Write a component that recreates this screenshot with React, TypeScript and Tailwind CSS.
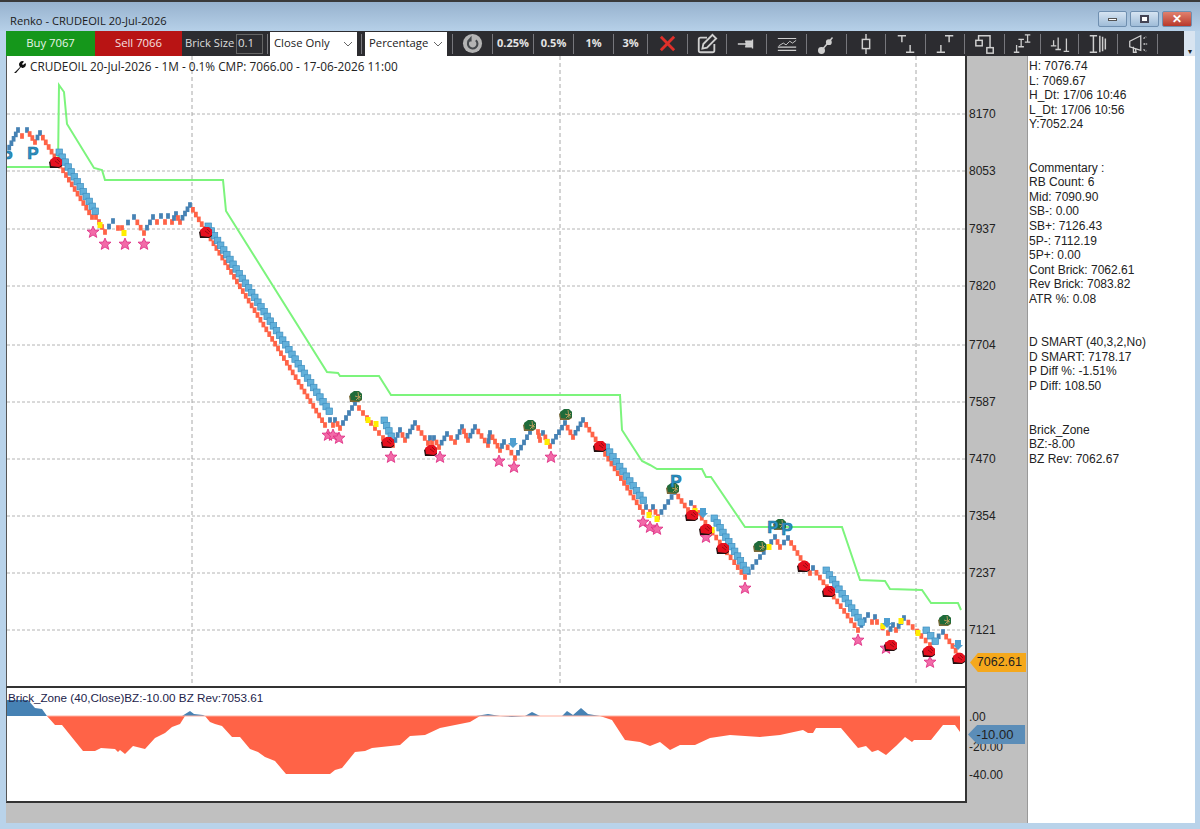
import React from "react";

type P = [number, number];

const line: P[] = [[7,152],[18,130],[22,136],[27,130],[35,142],[40,133],[92,217],[96,217],[105,232],[113,221],[118,228],[122,228],[134,217],[144,233],[153,217],[157,222],[161,216],[165,222],[168,216],[172,222],[176,214],[180,222],[190,205],[325,425],[330,420],[333,425],[335,420],[340,428],[355,403],[383,438],[393,445],[400,430],[405,440],[415,423],[428,443],[430,438],[432,443],[434,438],[439,447],[447,434],[455,442],[462,427],[468,440],[475,427],[488,445],[490,433],[500,450],[504,442],[515,458],[530,432],[538,432],[540,440],[543,433],[550,446],[565,423],[573,437],[583,420],[643,512],[646,507],[650,512],[653,507],[658,517],[675,492],[688,510],[691,503],[745,577],[775,537],[780,547],[788,538],[810,573],[813,568],[858,630],[868,615],[872,622],[875,617],[877,622],[888,633],[893,625],[896,630],[904,618],[930,645],[943,632],[962,660]];

const green = "7,167 58,167 59,85 64,92 67,124 94,168 102,170 105,180 223,180 226,211 327,372 338,373 340,376 379,376 391,395 620,395 622,430 642,461 650,465 657,469 702,469 706,477 711,477 745,527 842,527 860,580 885,581 890,589 922,590 931,603 958,603 961,610";

const runs: [P, P][] = [[[59,152],[95,211]],[[208,226],[329,411]],[[384,420],[391,436]],[[606,447],[643,500]],[[714,518],[746,570]],[[826,570],[861,622]],[[926,630],[935,641]]];
const arrows: P[] = [[513,443],[703,513],[887,623],[958,645]];
const redCubes: P[] = [[56,163],[206,233],[388,443],[431,451],[600,447],[692,516],[706,530],[723,549],[804,567],[829,592],[891,646],[929,652],[959,659]];
const greenCubes: P[] = [[356,397],[530,426],[566,415],[673,489],[760,547],[780,525],[945,621]];
const stars: P[] = [[93,232],[105,244],[125,244],[144,244],[328,435],[333,435],[339,438],[391,457],[440,457],[499,461],[514,467],[551,457],[643,522],[650,527],[657,529],[706,537],[745,588],[858,640],[886,648],[930,662]];
const pees: P[] = [[7,156],[33,152],[676,480],[773,526],[787,528]];
const yellows: P[] = [[100,225],[124,233],[368,420],[376,424],[547,442],[649,515],[657,519],[695,511],[712,530],[769,547],[883,626],[901,621],[918,633]];
const gridY = [114,171,229,286,345,402,459,516,573,630];
const prices = ["8170","8053","7937","7820","7704","7587","7470","7354","7237","7121"];
const gridX = [192,560,916];

function bricks(pts: P[]) {
  const out: { x: number; y: number; up: boolean }[] = [];
  for (let i = 0; i < pts.length - 1; i++) {
    const [a, b] = pts[i];
    const [c, d] = pts[i + 1];
    const n = Math.max(1, Math.round(Math.abs(d - b) / 4.8));
    for (let k = 1; k <= n; k++) {
      out.push({ x: a + ((c - a) * k) / n, y: b + ((d - b) * k) / n, up: d < b });
    }
  }
  return out;
}

function runSquares(a: P, b: P) {
  const n = Math.max(1, Math.round(Math.abs(b[1] - a[1]) / 4.8));
  const out: P[] = [];
  for (let k = 0; k <= n; k++) out.push([a[0] + ((b[0] - a[0]) * k) / n, a[1] + ((b[1] - a[1]) * k) / n]);
  return out;
}

const Cube = ({ x, y, red }: { x: number; y: number; red: boolean }) => (
  <g transform={`translate(${x} ${y})`}>
    <polygon points="-7,-1 -3,-4 3,-5 6,-3 6,3 3,5 -6,5" fill={red ? "#241010" : "#7a6a38"} />
    <polygon points="-6,-3 -2,-6 3,-6 6,-3 6,2 3,4 -5,3" fill={red ? "#e5101f" : "#1f6b3a"} />
    {red ? (
      <path d="M-1,-2 L3,1 M1,-4 L4,-1" stroke="#9a0a12" strokeWidth="1" />
    ) : (
      <path d="M-1,-1 L5,1 M0,3 L5,-2 M2,-5 L3,3" stroke="#b09a5a" strokeWidth="1" />
    )}
  </g>
);

const Star = ({ x, y }: { x: number; y: number }) => (
  <polygon
    transform={`translate(${x} ${y})`}
    points="0,-6 1.7,-2 6,-1.8 2.6,1 3.8,5.4 0,3 -3.8,5.4 -2.6,1 -6,-1.8 -1.7,-2"
    fill="#f26aa8"
    stroke="#dd2a82"
    strokeWidth="0.8"
  />
);

const Chart = () => (
  <svg viewBox="7 56 959 630" className="block w-[959px] h-[630px]">
    {gridY.map((y) => (
      <line key={y} x1="7" x2="966" y1={y} y2={y} stroke="#b4b4b4" strokeWidth="1" strokeDasharray="3 2" />
    ))}
    {gridX.map((x) => (
      <line key={x} x1={x} x2={x} y1="56" y2="686" stroke="#a8a8a8" strokeWidth="1" strokeDasharray="4 3" />
    ))}
    <polyline points={green} fill="none" stroke="#7cf47c" strokeWidth="2" />
    {bricks(line).map((b, i) => (
      <rect key={i} x={b.x - 1.9} y={b.y - 2.8} width="3.8" height="5.6" fill={b.up ? "#4682b4" : "#ff6347"} />
    ))}
    {yellows.map(([x, y], i) => (
      <rect key={i} x={x - 2.5} y={y - 3} width="5" height="6" fill="#ffee00" />
    ))}
    {runs.flatMap(([a, b], r) =>
      runSquares(a, b).map(([x, y], i) => (
        <rect key={`${r}-${i}`} x={x - 3} y={y - 3} width="6.5" height="6.5" fill="#62b0da" stroke="#3f8fc0" strokeWidth="0.7" />
      ))
    )}
    {arrows.map(([x, y], i) => (
      <polygon key={i} transform={`translate(${x} ${y})`} points="-3,-5 3,-5 3,0 5,0 0,5 -5,0 -3,0" fill="#4f9fd0" />
    ))}
    {stars.map(([x, y], i) => <Star key={i} x={x} y={y} />)}
    {redCubes.map(([x, y], i) => <Cube key={i} x={x} y={y} red />)}
    {greenCubes.map(([x, y], i) => <Cube key={i} x={x} y={y} red={false} />)}
    {pees.map(([x, y], i) => (
      <text key={i} x={x} y={y + 6.5} textAnchor="middle" fontFamily="Liberation Sans, sans-serif" fontWeight="700" fontSize="17" fill="#2a93c6" stroke="#1b6a94" strokeWidth="0.6">P</text>
    ))}
  </svg>
);

const SubPane = () => (
  <svg viewBox="7 688 959 113" className="block w-[959px] h-[113px]">
    <polygon points="7,716 7,700 28,700 35,708 42,709 47,716" fill="#4682b4" />
    <polygon points="47,716 55,725 62,725 83,751 95,751 101,748 115,749 118,752 120,750 125,754 133,746 145,749 155,738 165,733 172,727 180,724 185,716" fill="#ff6347" />
    <polygon points="182,716 190,711 194,714 203,715 205,716" fill="#4682b4" />
    <polygon points="205,716 210,722 215,724 222,726 232,737 240,737 250,749 258,752 265,757 275,761 286,774 330,774 335,770 342,768 355,752 365,751 372,748 400,745 410,736 425,735 440,728 470,722 480,716" fill="#ff6347" />
    <polygon points="476,716 488,714 500,716 512,717 525,716 532,712 540,716 556,716 562,716 567,711 573,715 581,708 588,714 600,716" fill="#4682b4" />
    <polygon points="600,716 612,720 625,740 640,742 650,746 660,742 670,750 680,745 695,745 710,738 730,735 760,737 780,735 803,730 808,733 813,733 816,728 841,728 858,748 866,746 872,752 878,750 886,755 896,746 905,737 912,742 914,740 931,740 943,725 955,725 960,732 960,716" fill="#ff6347" />
    <line x1="47" x2="960" y1="716" y2="716" stroke="#ffb0a0" strokeWidth="1" />
  </svg>
);

const Sep = () => <div className="w-px h-[20px] bg-[#77777c] shrink-0" />;

const Cell = ({ w, children }: { w: string; children: React.ReactNode }) => (
  <div className="flex items-center h-full shrink-0">
    <div className={`${w} flex items-center justify-center`}>{children}</div>
    <Sep />
  </div>
);

const Ic = ({ children, w = 1.5 }: { children: React.ReactNode; w?: number }) => (
  <svg viewBox="0 0 24 24" width="22" height="22" fill="none" stroke="#cfcfcf" strokeWidth={w}>{children}</svg>
);

const Select = ({ label, w }: { label: string; w: string }) => (
  <div className={`${w} h-[24px] bg-white flex items-center justify-between pl-[4px] pr-[4px] text-[11.3px] text-[#222] shrink-0`}>
    <span>{label}</span>
    <svg width="10" height="6" viewBox="0 0 10 6" fill="none" stroke="#666"><path d="M1 1l4 4 4-4" /></svg>
  </div>
);

const panelLines = [
  "H: 7076.74","L: 7069.67","H_Dt: 17/06 10:46","L_Dt: 17/06 10:56","Y:7052.24","","",
  "Commentary :","RB Count: 6","Mid: 7090.90","SB-: 0.00","SB+: 7126.43","5P-: 7112.19","5P+: 0.00","Cont Brick: 7062.61","Rev Brick: 7083.82","ATR %: 0.08","","",
  "D SMART (40,3,2,No)","D SMART: 7178.17","P Diff %: -1.51%","P Diff: 108.50","","",
  "Brick_Zone","BZ:-8.00","BZ Rev: 7062.67",
];

const WinBtn = ({ children, close }: { children: React.ReactNode; close?: boolean }) => (
  <div className={`h-[16px] flex items-center justify-center border border-[#6f8fb0] rounded-[2px] ${close ? "w-[30px] bg-gradient-to-b from-[#e0806e] to-[#b8372a]" : "w-[29px] bg-gradient-to-b from-[#d6e4f2] to-[#9fbcd8]"}`}>
    {children}
  </div>
);

export default function App() {
  return (
    <div className="w-[1200px] h-[829px] overflow-hidden bg-[#b9d3ea] flex flex-col text-[#222] font-['Open_Sans','Noto_Sans',sans-serif]">
      <div className="h-[2px] bg-[#3a3a3a] shrink-0" />
      <div className="h-[29px] shrink-0 flex items-center justify-between pl-[10px] pr-[7px] pt-[3px] bg-gradient-to-b from-[#97b2ce] to-[#b6d0e8]">
        <span className="text-[11.15px] text-[#1a1a1a] leading-none mt-[5px]">Renko - CRUDEOIL 20-Jul-2026</span>
        <div className="flex gap-[3px] mt-[2px] mr-[1px]">
          <WinBtn><div className="w-[9px] h-[3px] bg-white border border-[#555]" /></WinBtn>
          <WinBtn><div className="w-[9px] h-[8px] bg-white border-2 border-[#445]" /></WinBtn>
          <WinBtn close><span className="text-[12px] font-bold text-white leading-none">✕</span></WinBtn>
        </div>
      </div>

      <div className="h-[25px] shrink-0 ml-[6px] mr-[5px] bg-[#2c2c30] flex items-center overflow-hidden">
        <div className="w-[89px] h-full bg-[#15971b] text-[#e8f5e8] text-[11.3px] flex items-center justify-center shrink-0">Buy 7067</div>
        <div className="w-[87px] h-full bg-[#b81414] text-[#f5e0e0] text-[11.3px] flex items-center justify-center shrink-0">Sell 7066</div>
        <div className="w-[54px] text-[#dddddd] text-[11.2px] pl-[3px] shrink-0 whitespace-nowrap">Brick Size</div>
        <div className="w-[27px] h-[20px] bg-[#2c2c30] border border-[#666] text-[#e0e0e0] text-[11.5px] leading-[15px] pl-[1px] shrink-0">0.1</div>
        <div className="w-[4px] shrink-0" />
        <div className="w-px h-[20px] bg-[#77777c] shrink-0 mr-[2px]" />
        <Select label="Close Only" w="w-[87px]" />
        <div className="w-[4px] shrink-0" />
        <div className="w-px h-[20px] bg-[#77777c] shrink-0 mr-[3px]" />
        <Select label="Percentage" w="w-[82px]" />
        <div className="w-[5px] shrink-0" />
        <Sep />
        <Cell w="w-[39px]">
          <svg viewBox="0 0 22 22" width="21" height="21">
            <circle cx="11" cy="11" r="10" fill="#b4b4b4" />
            <path d="M14.5 7.5A5 5 0 1 1 8.5 7" fill="none" stroke="#44484c" strokeWidth="2.2" />
            <path d="M12 3v6h-5z" fill="#44484c" transform="translate(-2 0)" />
          </svg>
        </Cell>
        <Cell w="w-[40px]"><span className="text-[11px] font-bold text-[#e4e4e4]">0.25%</span></Cell>
        <Cell w="w-[39px]"><span className="text-[11px] font-bold text-[#e4e4e4]">0.5%</span></Cell>
        <Cell w="w-[39px]"><span className="text-[11px] font-bold text-[#e4e4e4]">1%</span></Cell>
        <Cell w="w-[33px]"><span className="text-[11px] font-bold text-[#e4e4e4]">3%</span></Cell>
        <Cell w="w-[39px]"><svg viewBox="0 0 20 20" width="19" height="19" stroke="#e0302a" strokeWidth="3"><path d="M3 3l14 14M17 3L3 17" /></svg></Cell>
        <Cell w="w-[38px]"><Ic w={2}><path d="M12 5H5a2 2 0 0 0-2 2v12a2 2 0 0 0 2 2h13a2 2 0 0 0 2-2v-7" /><path d="M18 2l4 4-10 10-5 1 1-5z" /></Ic></Cell>
        <Cell w="w-[39px]"><Ic><path d="M2 12h9M10 12h5" /><path d="M10 9h8M10 15h8M18 7v10" /><path d="M11 10h6v4h-6z" fill="#cfcfcf" /></Ic></Cell>
        <Cell w="w-[39px]"><Ic w={1.3}><path d="M2 6h20M2 19h20M2 15.5h20" /><path d="M3 14l5-3 3 2 4-4 3 2 4-3" strokeWidth="1" /></Ic></Cell>
        <Cell w="w-[39px]"><Ic w={1.6}><path d="M6 19L18 5" /><circle cx="6" cy="19" r="3" fill="#cfcfcf" /><circle cx="14" cy="10" r="2.4" fill="#cfcfcf" /></Ic></Cell>
        <Cell w="w-[38px]"><Ic w={1.6}><path d="M12 1v6M12 17v6" /><rect x="8" y="7" width="8" height="10" /></Ic></Cell>
        <Cell w="w-[39px]"><Ic w={1.6}><path d="M3 3h9M7.500 3v7M12 21h9M16.500 21V13" /></Ic></Cell>
        <Cell w="w-[38px]"><Ic w={1.6}><path d="M12 3h9M16.500 3v7M3 21h9M7.500 21V13" /></Ic></Cell>
        <Cell w="w-[39px]"><Ic w={1.6}><rect x="2" y="8" width="7" height="6" /><rect x="14" y="16" width="7" height="6" /><path d="M5 8V3h12.500v13" /></Ic></Cell>
        <Cell w="w-[35px]"><Ic w={1.4}><path d="M2 21h6M5 21v-8M7 15h6M10 15V7M7 7h6M14 10h6M17 10V2M14 2h6" /></Ic></Cell>
        <Cell w="w-[37px]"><Ic w={1.4}><path d="M2 14h6M5 14V8M10 5v13M7 18h6M19 6v14M16 20h6" /></Ic></Cell>
        <Cell w="w-[38px]"><Ic w={1.6}><path d="M3 3h8M7 3v18M3 21h8M14 3v18M17 4v16M20 6v12" /></Ic></Cell>
        <Cell w="w-[39px]"><Ic w={1.4}><path d="M3 9l12-6v16L3 15zM7 15v6h3l-1-4" /><path d="M18 6l3-2M18 12h4M18 18l3 2" strokeDasharray="2 1" /></Ic></Cell>
        <div className="flex-1" />
        <div className="w-[11px] h-full bg-[#d8e4f0] flex items-end justify-center text-[8px] leading-none text-[#222] pb-[1px]">▾</div>
      </div>

      <div className="flex-1 min-h-0 flex pl-[6px] pr-[5px] pb-[6px]">
        <div className="w-[1021px] bg-[#c0c0c0] shrink-0 flex flex-col">
          <div className="flex h-[632px] shrink-0">
            <div className="w-[961px] bg-white border-l border-r-2 border-l-[#555] border-r-[#333] border-b-2 border-b-[#333] relative shrink-0">
              <Chart />
              <div className="absolute left-[6px] top-[4px] flex items-center gap-[3px] text-[11.8px] text-[#222] leading-none whitespace-nowrap">
                <svg viewBox="0 0 14 14" width="14" height="14"><path d="M1 13l6-6-1-2a3.4 3.4 0 0 1 5-3.5L9 4l1 1 2.5-2A3.4 3.4 0 0 1 9 8L8 7l-5 6z" fill="#111" /></svg>
                <span>CRUDEOIL 20-Jul-2026 - 1M - 0.1% CMP: 7066.00 - 17-06-2026 11:00</span>
              </div>
            </div>
            <div className="flex-1 relative text-[12px] font-['Liberation_Sans',sans-serif] text-[#222]">
              {prices.map((p, i) => (
                <div key={p} className="absolute left-[2px] leading-none" style={{ top: gridY[i] - 62 }}>{p}</div>
              ))}
              <div className="absolute left-[3px] top-[597px] w-[56px] h-[19px] bg-[#f5a81c] flex items-center justify-end pr-[4px] text-[12.5px] [clip-path:polygon(14%_0,100%_0,100%_100%,14%_100%,0_50%)]">7062.61</div>
            </div>
          </div>
          <div className="flex h-[115px] shrink-0">
            <div className="w-[961px] h-[115px] bg-white border-l border-l-[#555] border-r-2 border-r-[#333] border-b-2 border-b-[#333] relative shrink-0">
              <SubPane />
              <div className="absolute left-[1px] top-[4px] text-[11.7px] font-['Liberation_Sans',sans-serif] text-[#22224a] leading-none whitespace-nowrap">Brick_Zone (40,Close)BZ:-10.00 BZ Rev:7053.61</div>
            </div>
            <div className="flex-1 relative text-[12px] font-['Liberation_Sans',sans-serif] text-[#222]">
              <div className="absolute left-[2px] top-[23px] leading-none">.00</div>
              <div className="absolute left-[2px] top-[53px] leading-none">-20.00</div>
              <div className="absolute left-[2px] top-[81px] leading-none">-40.00</div>
              <div className="absolute left-[1px] top-[37px] w-[57px] h-[19px] bg-[#5b8db8] flex items-center justify-center pr-[3px] text-[13px] [clip-path:polygon(16%_0,100%_0,100%_100%,16%_100%,0_50%)]">-10.00</div>
            </div>
          </div>
        </div>
        <div className="w-px bg-[#999] shrink-0" />
        <div className="flex-1 bg-white pl-[1px] pt-[3px] text-[12px] leading-[14.56px] font-['Liberation_Sans',sans-serif] text-[#222] whitespace-nowrap overflow-hidden">
          {panelLines.map((l, i) => (
            <div key={i} className="h-[14.56px]">{l}</div>
          ))}
        </div>
      </div>
    </div>
  );
}
